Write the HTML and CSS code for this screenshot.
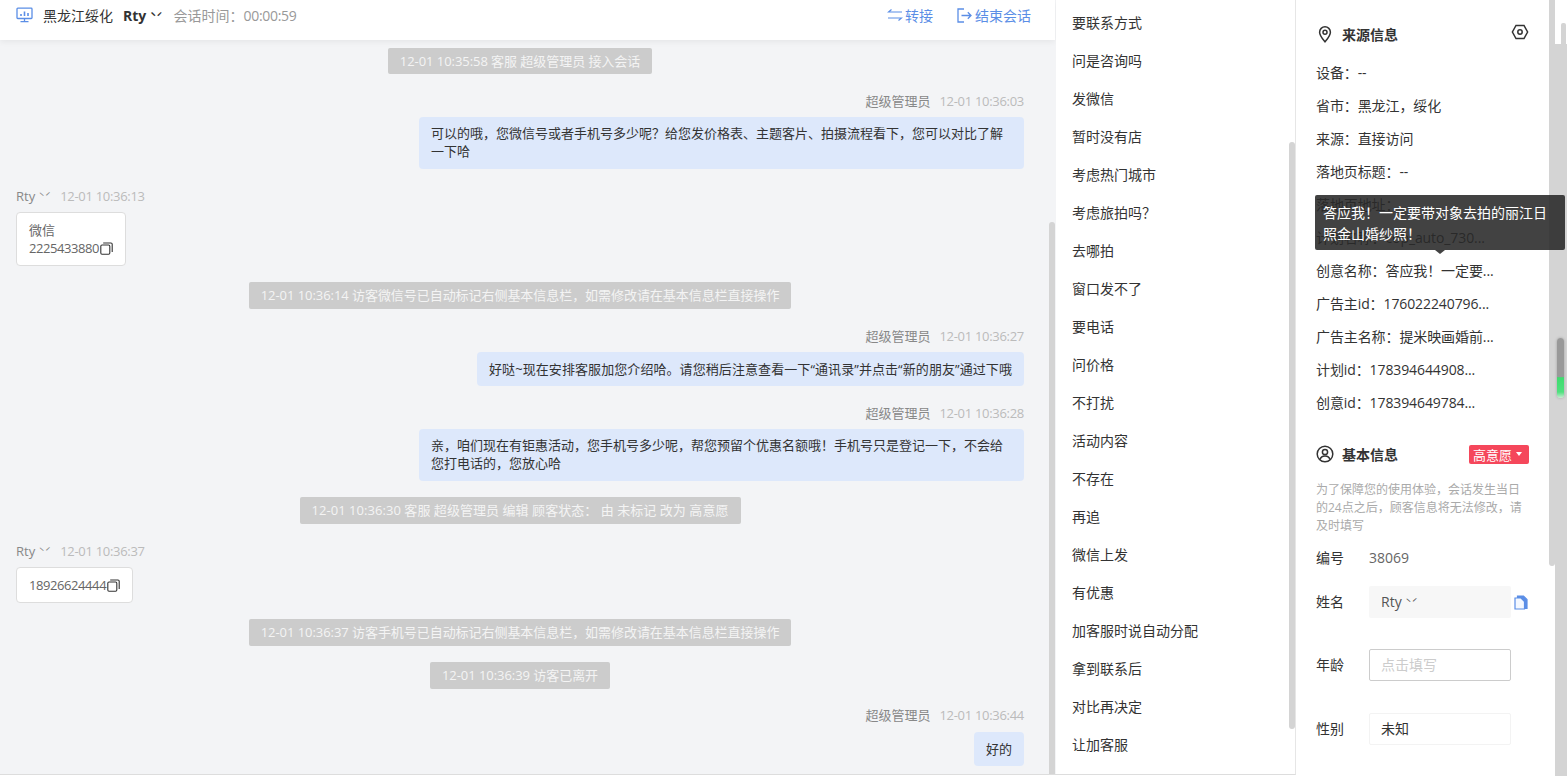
FILE: index.html
```html
<!DOCTYPE html>
<html lang="zh-CN">
<head>
  <meta charset="UTF-8" />
  <title>会话详情</title>
  <link rel="stylesheet" href="styles.css">
</head>
<body>
  <div class="app">

    <section class="chat">
      <header class="chat-header">
        <div class="header-left">
          <svg class="icon-monitor" width="17" height="16" viewBox="0 0 17 16" fill="none" stroke="#5b8ee6" stroke-width="1.3">
            <rect x="1" y="1.2" width="15" height="10.3" rx="0.8"/>
            <path d="M5 9V7M8.5 9V4.5M12 9V6" stroke-width="1.6"/>
            <path d="M8.5 11.5V14.5M4.5 14.7H12.5"/>
          </svg>
          <span class="region">黑龙江绥化</span>
          <span class="visitor">Rty <i class="ticks">ˋˊ</i></span>
          <span class="timer">会话时间：<span class="digits">00:00:59</span></span>
        </div>
        <div class="header-right">
          <a class="action">
            <svg width="16" height="12" viewBox="0 0 16 12" fill="none" stroke="#5b8ee6" stroke-width="1.2">
              <path d="M15 3H1.5L4.5 0.5M1 9H14.5L11.5 11.5"/>
            </svg>
            转接
          </a>
          <a class="action action-end">
            <svg width="15" height="15" viewBox="0 0 15 15" fill="none" stroke="#5b8ee6" stroke-width="1.3">
              <path d="M7 1H1V14H7"/>
              <path d="M4.5 7.5H14M10.8 4.3L14 7.5L10.8 10.7"/>
            </svg>
            结束会话
          </a>
        </div>
      </header>

      <div class="messages">
        <div class="notice notice-first">12-01 10:35:58 客服 超级管理员 接入会话</div>

        <div class="msg msg-agent">
          <div class="meta"><span class="name">超级管理员</span><span class="time">12-01 10:36:03</span></div>
          <div class="bubble bubble-wide">可以的哦，您微信号或者手机号多少呢？给您发价格表、主题客片、拍摄流程看下，您可以对比了解一下哈</div>
        </div>

        <div class="msg">
          <div class="meta"><span class="name">Rty <i class="ticks">ˋˊ</i></span><span class="time">12-01 10:36:13</span></div>
          <div class="card card-tall">
            <div>微信</div>
            <div class="card-line"><span class="digits-tight">2225433880</span><svg class="copy" width="13" height="13" viewBox="0 0 13 13" fill="none" stroke="#333" stroke-width="1.1"><rect x="0.8" y="3" width="9" height="9.2" rx="1.2"/><path d="M3.2 1H11a1.2 1.2 0 0 1 1.2 1.2V10"/></svg></div>
          </div>
        </div>

        <div class="notice">12-01 10:36:14 访客微信号已自动标记右侧基本信息栏，如需修改请在基本信息栏直接操作</div>

        <div class="msg msg-agent">
          <div class="meta"><span class="name">超级管理员</span><span class="time">12-01 10:36:27</span></div>
          <div class="bubble bubble-line">好哒~现在安排客服加您介绍哈。请您稍后注意查看一下“通讯录”并点击“新的朋友”通过下哦</div>
        </div>

        <div class="msg msg-agent">
          <div class="meta"><span class="name">超级管理员</span><span class="time">12-01 10:36:28</span></div>
          <div class="bubble bubble-wide">亲，咱们现在有钜惠活动，您手机号多少呢，帮您预留个优惠名额哦！手机号只是登记一下，不会给您打电话的，您放心哈</div>
        </div>

        <div class="notice notice-status">12-01 10:36:30 客服 超级管理员 编辑 顾客状态： 由 未标记 改为 高意愿</div>

        <div class="msg">
          <div class="meta"><span class="name">Rty <i class="ticks">ˋˊ</i></span><span class="time">12-01 10:36:37</span></div>
          <div class="card card-line"><span class="digits-tight">18926624444</span><svg class="copy" width="13" height="13" viewBox="0 0 13 13" fill="none" stroke="#333" stroke-width="1.1"><rect x="0.8" y="3" width="9" height="9.2" rx="1.2"/><path d="M3.2 1H11a1.2 1.2 0 0 1 1.2 1.2V10"/></svg></div>
        </div>

        <div class="notice">12-01 10:36:37 访客手机号已自动标记右侧基本信息栏，如需修改请在基本信息栏直接操作</div>
        <div class="notice">12-01 10:36:39 访客已离开</div>

        <div class="msg msg-agent msg-last">
          <div class="meta"><span class="name">超级管理员</span><span class="time">12-01 10:36:44</span></div>
          <div class="bubble">好的</div>
        </div>
      </div>

      <div class="thumb thumb-chat"></div>
    </section>

    <aside class="quick">
      <ul>
        <li>要联系方式</li>
        <li>问是咨询吗</li>
        <li>发微信</li>
        <li>暂时没有店</li>
        <li>考虑热门城市</li>
        <li>考虑旅拍吗？</li>
        <li>去哪拍</li>
        <li>窗口发不了</li>
        <li>要电话</li>
        <li>问价格</li>
        <li>不打扰</li>
        <li>活动内容</li>
        <li>不存在</li>
        <li>再追</li>
        <li>微信上发</li>
        <li>有优惠</li>
        <li>加客服时说自动分配</li>
        <li>拿到联系后</li>
        <li>对比再决定</li>
        <li>让加客服</li>
      </ul>
      <div class="thumb thumb-quick"></div>
    </aside>

    <aside class="info">
      <div class="section-title title-source">
        <svg width="18" height="18" viewBox="0 0 18 18" fill="none" stroke="#333" stroke-width="1.5">
          <path d="M9 16.8C6 13.2 3.6 10.6 3.6 7.2a5.4 5.4 0 0 1 10.8 0C14.4 10.6 12 13.2 9 16.8Z"/>
          <circle cx="9" cy="7.2" r="2"/>
        </svg>
        <span>来源信息</span>
        <svg class="icon-nut" width="18" height="16" viewBox="0 0 18 16" fill="none" stroke="#333" stroke-width="1.5">
          <path d="M5 1.5H13L16.6 8L13 14.5H5L1.4 8Z"/>
          <circle cx="9" cy="8" r="2.2"/>
        </svg>
      </div>

      <ul class="source-list">
        <li>设备：--</li>
        <li>省市：黑龙江，绥化</li>
        <li>来源：直接访问</li>
        <li>落地页标题：--</li>
        <li>落地页地址：</li>
        <li>计划名称：cop_auto_730...</li>
        <li>创意名称：答应我！一定要...</li>
        <li>广告主id：176022240796...</li>
        <li>广告主名称：提米映画婚前...</li>
        <li>计划id：178394644908...</li>
        <li>创意id：178394649784...</li>
      </ul>

      <div class="section-title title-basic">
        <svg width="18" height="18" viewBox="0 0 18 18" fill="none" stroke="#333" stroke-width="1.5">
          <circle cx="9" cy="9" r="7.8"/>
          <circle cx="9" cy="7" r="2.6"/>
          <path d="M4 14.5C4.8 12 6.6 11 9 11s4.2 1 5 3.5"/>
        </svg>
        <span>基本信息</span>
        <div class="badge">高意愿<i class="caret"></i></div>
      </div>

      <p class="tip">为了保障您的使用体验，会话发生当日的24点之后，顾客信息将无法修改，请及时填写</p>

      <div class="field field-id"><label>编号</label><span class="value">38069</span></div>
      <div class="field field-name">
        <label>姓名</label>
        <div class="box box-filled">Rty <i class="ticks ticks-thin">ˋˊ</i></div>
        <svg class="icon-file" width="14" height="15" viewBox="0 0 14 15" fill="none" stroke="#5b8ee6" stroke-width="1.2">
          <path d="M3.5 3V1H9.5L13 4.5V13.5H10.5" fill="#5b8ee6"/>
          <path d="M1 3H7L10.5 6.5V14H1Z" fill="#f4f8ff"/>
        </svg>
      </div>
      <div class="field field-age">
        <label>年龄</label>
        <div class="box box-input">点击填写</div>
      </div>
      <div class="field field-gender">
        <label>性别</label>
        <div class="box box-plain">未知</div>
      </div>

      <div class="thumb thumb-info"></div>

      <div class="tooltip">答应我！一定要带对象去拍的丽江日照金山婚纱照！</div>
    </aside>

    <div class="rail">
      <div class="rail-top"><div class="rail-stub"></div></div>
      <div class="rail-handle"></div>
    </div>

  </div>
</body>
</html>
```

FILE: styles.css
```css
:root {
  --blue: #5b8ee6;
  --text: #333;
  --chat-bg: #f3f4f6;
  --bar: #d4d4d4;
}

* {
  margin: 0;
  padding: 0;
  box-sizing: border-box;
}

html, body {
  height: 100%;
  overflow: hidden;
  background: #fff;
}

body {
  font-family: "Open Sans", "Noto Sans CJK SC", sans-serif;
  font-size: 13px;
  color: var(--text);
}

i { font-style: normal; }

ul { list-style: none; }

.app {
  display: flex;
  height: 776px;
}

.thumb {
  position: absolute;
  width: 6px;
  background: var(--bar);
  border-radius: 3px 3px 0 0;
}

/* chat column */
.chat {
  position: relative;
  width: 1056px;
  height: 775px;
  flex-shrink: 0;
  background: var(--chat-bg);
  border-bottom: 1px solid #ddd;
  overflow: hidden;
}

.chat-header {
  width: 1055px;
  height: 40px;
  padding: 0 24px 10px 16px;
  display: flex;
  justify-content: space-between;
  align-items: center;
  background: #fff;
  box-shadow: 0 2px 6px rgba(0, 0, 0, 0.06);
}

.header-left {
  display: flex;
  align-items: center;
  font-size: 14px;
}

.region { margin-left: 10px; }

.visitor {
  margin-left: 10px;
  font-weight: 700;
}

.ticks {
  font-family: "Noto Sans CJK SC", sans-serif;
  font-weight: 700;
  font-size: 10.5px;
}

.ticks-thin { font-weight: 400; }

.msg .ticks { font-weight: 400; }

.timer {
  margin-left: 11px;
  color: #999;
  font-size: 14px;
}

.digits { letter-spacing: -0.3px; }

.header-right {
  display: flex;
  align-items: center;
  font-size: 14px;
  color: var(--blue);
}

.action {
  display: flex;
  align-items: center;
  gap: 2px;
}

.action-end {
  margin-left: 24px;
  gap: 3px;
}

.messages {
  padding: 8px 32px 0 16px;
  display: flex;
  flex-direction: column;
}

.notice {
  align-self: center;
  height: 27px;
  line-height: 27px;
  margin-top: 16px;
  padding: 0 12px;
  background: #ccc;
  color: #f4f4f4;
  border-radius: 2px;
  letter-spacing: -0.05px;
}

.notice-first {
  height: 26px;
  line-height: 26px;
  margin-top: 0;
}

.notice-status { letter-spacing: 0.05px; }

.msg {
  display: flex;
  flex-direction: column;
  align-items: flex-start;
  margin-top: 17px;
}

.msg-agent { align-items: flex-end; }

.msg-last { margin-top: 16px; }

.msg-last .meta { margin-bottom: 7px; }

.meta {
  height: 20px;
  line-height: 20px;
  margin-bottom: 6px;
  display: flex;
  gap: 9px;
}

.name { color: #888; }

.time {
  color: #bbb;
  letter-spacing: -0.3px;
}

.bubble {
  padding: 8px 12px;
  line-height: 18px;
  background: #dde8fb;
  border-radius: 4px;
}

.bubble-wide {
  width: 605px;
  padding-top: 7px;
  padding-bottom: 9px;
}

.bubble-line { letter-spacing: 0.08px; }

.card {
  padding: 8px 12px;
  line-height: 18px;
  background: #fff;
  color: #666;
  border: 1px solid #ddd;
  border-radius: 4px;
}

.card-tall { width: 110px; }

.card-line {
  display: flex;
  align-items: center;
}

.digits-tight { letter-spacing: -0.42px; }

.copy {
  flex-shrink: 0;
  margin-left: 1px;
}

.thumb-chat {
  left: 1049px;
  top: 222px;
  bottom: 0;
}

/* quick replies */
.quick {
  position: relative;
  width: 240px;
  height: 775px;
  flex-shrink: 0;
  padding: 4px 0 0 16px;
  font-size: 14px;
  background: #fff;
  border-right: 1px solid #e6e6e6;
  border-bottom: 1px solid #ddd;
  overflow: hidden;
}

.quick li {
  height: 38px;
  line-height: 37px;
}

.thumb-quick {
  left: 233px;
  top: 142px;
  height: 587px;
  border-radius: 3px;
}

/* visitor info */
.info {
  position: relative;
  width: 259px;
  flex-shrink: 0;
  padding: 0 0 0 20px;
  font-size: 14px;
  background: #fff;
}

.section-title {
  display: flex;
  align-items: center;
  gap: 8px;
  font-weight: 700;
  height: 20px;
}

.title-source { margin-top: 24px; }

.icon-nut {
  margin-left: auto;
  margin-right: 26px;
  margin-top: -4px;
}

.source-list {
  margin-top: 12px;
  letter-spacing: -0.1px;
}

.source-list li {
  height: 33px;
  line-height: 33px;
  white-space: nowrap;
}

.title-basic {
  margin-top: 25px;
  padding-right: 26px;
}

.badge {
  margin-left: auto;
  width: 60px;
  height: 19px;
  display: flex;
  align-items: center;
  padding-left: 4px;
  gap: 4px;
  font-size: 13px;
  background: #f5475b;
  color: #fff;
  font-weight: 400;
  border-radius: 2px;
}

.caret {
  width: 0;
  height: 0;
  border-left: 3.5px solid transparent;
  border-right: 3.5px solid transparent;
  border-top: 4px solid #fff;
}

.tip {
  width: 213px;
  margin-top: 17px;
  font-size: 12px;
  line-height: 18px;
  color: #aaa;
}

.field {
  display: flex;
  align-items: center;
}

.field label {
  width: 53px;
  flex-shrink: 0;
  margin-bottom: 2px;
}

.field-id {
  margin-top: 12px;
  height: 20px;
}

.field-id label { margin-bottom: 0; }

.value { color: #666; }

.field-name { margin-top: 19px; }

.field-age { margin-top: 31px; }

.field-gender { margin-top: 32px; }

.box {
  width: 142px;
  height: 32px;
  line-height: 30px;
  padding: 0 11px;
  border: 1px solid transparent;
  border-radius: 2px;
}

.box-filled {
  background: #f7f7f7;
  color: #555;
}

.box-input {
  border-color: #ccc;
  color: #ccc;
}

.box-plain { border-color: #f3f3f3; }

.icon-file { margin-left: 3px; }

.thumb-info {
  left: 253px;
  top: 0;
  height: 566px;
  border-radius: 0 0 3px 3px;
}

.tooltip {
  position: absolute;
  z-index: 2;
  left: 19px;
  top: 195px;
  width: 250px;
  padding: 7px 8px 6px;
  font-size: 14px;
  line-height: 21px;
  color: #fff;
  background: rgba(40, 40, 40, 0.88);
  border-radius: 2px;
}

.tooltip::after {
  content: "";
  position: absolute;
  left: 120px;
  bottom: -4px;
  border-left: 5px solid transparent;
  border-right: 5px solid transparent;
  border-top: 4px solid rgba(40, 40, 40, 0.88);
}

/* right rail */
.rail {
  position: relative;
  flex: 1;
  display: flex;
  flex-direction: column;
}

.rail-top {
  height: 44px;
  padding-top: 23px;
  padding-left: 6px;
}

.rail-stub {
  width: 5px;
  height: 21px;
  background: var(--bar);
  border-radius: 2px 2px 0 0;
}

.rail-handle {
  flex: 1;
  background: var(--bar);
}

.rail-handle::after {
  content: "";
  position: absolute;
  left: 2px;
  top: 338px;
  width: 7px;
  height: 60px;
  border-radius: 4px;
  background: linear-gradient(#999 0, #999 65%, #3ddc6e 66%, #4fe07e 90%, #c9ecd3 100%);
  box-shadow: 0 0 3px rgba(0, 0, 0, 0.25);
}
```
